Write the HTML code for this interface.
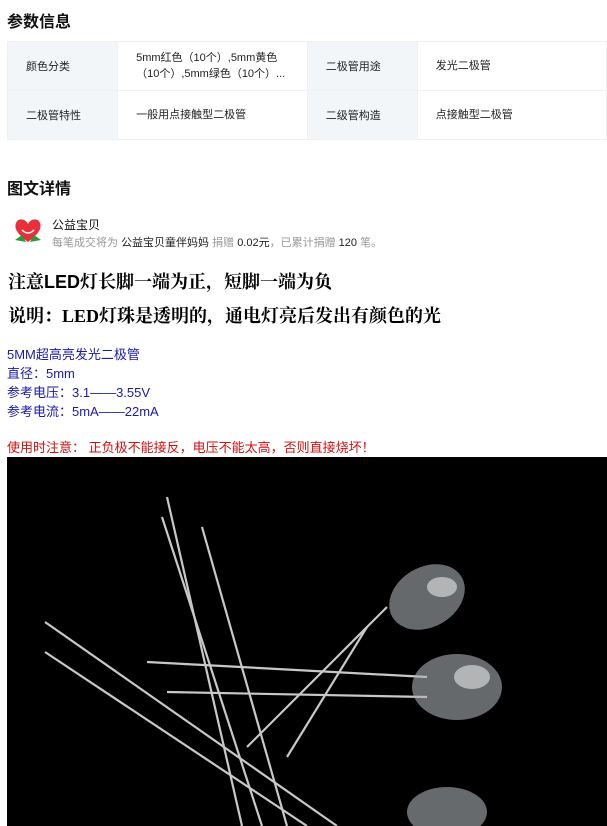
<!DOCTYPE html>
<html><head><meta charset="utf-8"><style>
body{margin:0;background:#fff;font-family:"Liberation Sans","Noto Sans CJK SC",sans-serif;width:607px;height:826px;overflow:hidden;position:relative}
.a{position:absolute;white-space:nowrap}
h2{position:absolute;margin:0;font-size:16px;font-weight:bold;color:#111}
table{position:absolute;left:7px;top:41px;border-collapse:collapse;width:600px;font-size:11px;color:#222}
td{height:48px;border:1px solid #eef0f3;padding:0}
td.l{background:#f3f6f9;padding-left:18px;width:92px}
td.v{padding-left:18px;width:172px;line-height:16px}
</style></head><body>
<h2 style="left:7px;top:8px">参数信息</h2>
<table>
<tr><td class="l">颜色分类</td><td class="v">5mm红色（10个）,5mm黄色<br>（10个）,5mm绿色（10个）...</td><td class="l">二极管用途</td><td class="v">发光二极管</td></tr>
<tr><td class="l">二极管特性</td><td class="v">一般用点接触型二极管</td><td class="l">二级管构造</td><td class="v">点接触型二极管</td></tr>
</table>
<h2 style="left:7px;top:175px">图文详情</h2>
<svg class="a" style="left:13px;top:216px" width="30" height="30" viewBox="0 0 30 30"><path d="M15 26 C4 18 1 12 3 7 C5 2 12 2 15 8 C18 2 25 2 27 7 C29 12 26 18 15 26Z" fill="#e8303a"/><path d="M2 24 L9 19 L13 26 Z M28 24 L21 19 L17 26Z" fill="#2a9a3a"/><path d="M9 14 Q15 20 21 14" stroke="#fff" stroke-width="1.5" fill="none"/></svg>
<div class="a" style="left:52px;top:216px;font-size:12px;color:#111">公益宝贝</div>
<div class="a" style="left:52px;top:234px;font-size:11px;color:#999">每笔成交将为 <span style="color:#222">公益宝贝童伴妈妈</span> 捐赠 <span style="color:#222">0.02元</span>，已累计捐赠 <span style="color:#222">120</span> 笔。</div>
<div class="a" style="left:8px;top:268px;font-size:18px;font-weight:bold;color:#000;font-family:'Liberation Serif','Noto Serif CJK SC',serif">注意<span style="font-family:'Liberation Sans',sans-serif">LED</span>灯长脚一端为正，短脚一端为负</div>
<div class="a" style="left:8px;top:302px;font-size:18px;font-weight:bold;color:#000;font-family:'Liberation Serif','Noto Serif CJK SC',serif">说明：LED灯珠是透明的，通电灯亮后发出有颜色的光</div>
<div class="a" style="left:7px;top:345px;font-size:13px;line-height:19px;color:#1a1aa8">5MM超高亮发光二极管<br>直径：5mm<br>参考电压：3.1——3.55V<br>参考电流：5mA——22mA</div>
<div class="a" style="left:7px;top:437px;font-size:13px;color:#d01010">使用时注意： 正负极不能接反，电压不能太高，否则直接烧坏！</div>
<svg class="a" style="left:7px;top:457px" width="600" height="369" viewBox="0 0 600 369">
<rect width="600" height="369" fill="#000"/>
<g stroke="#c8c8c8" stroke-width="2.2" fill="none">
<line x1="155" y1="60" x2="255" y2="369"/>
<line x1="195" y1="70" x2="280" y2="369"/>
<line x1="160" y1="40" x2="235" y2="369"/>
<line x1="38" y1="165" x2="330" y2="369"/>
<line x1="38" y1="195" x2="300" y2="369"/>
<line x1="140" y1="205" x2="420" y2="220"/>
<line x1="160" y1="235" x2="420" y2="240"/>
<line x1="240" y1="290" x2="380" y2="150"/>
<line x1="280" y1="300" x2="360" y2="170"/>
</g>
<g fill="#aab0b5" opacity=".6">
<ellipse cx="420" cy="140" rx="40" ry="30" transform="rotate(-30 420 140)"/>
<ellipse cx="450" cy="230" rx="45" ry="33"/>
<ellipse cx="440" cy="355" rx="40" ry="25"/>
</g>
<g fill="#fff" opacity=".5">
<ellipse cx="435" cy="130" rx="15" ry="10"/>
<ellipse cx="465" cy="220" rx="18" ry="12"/>
</g>
</svg>
</body></html>
